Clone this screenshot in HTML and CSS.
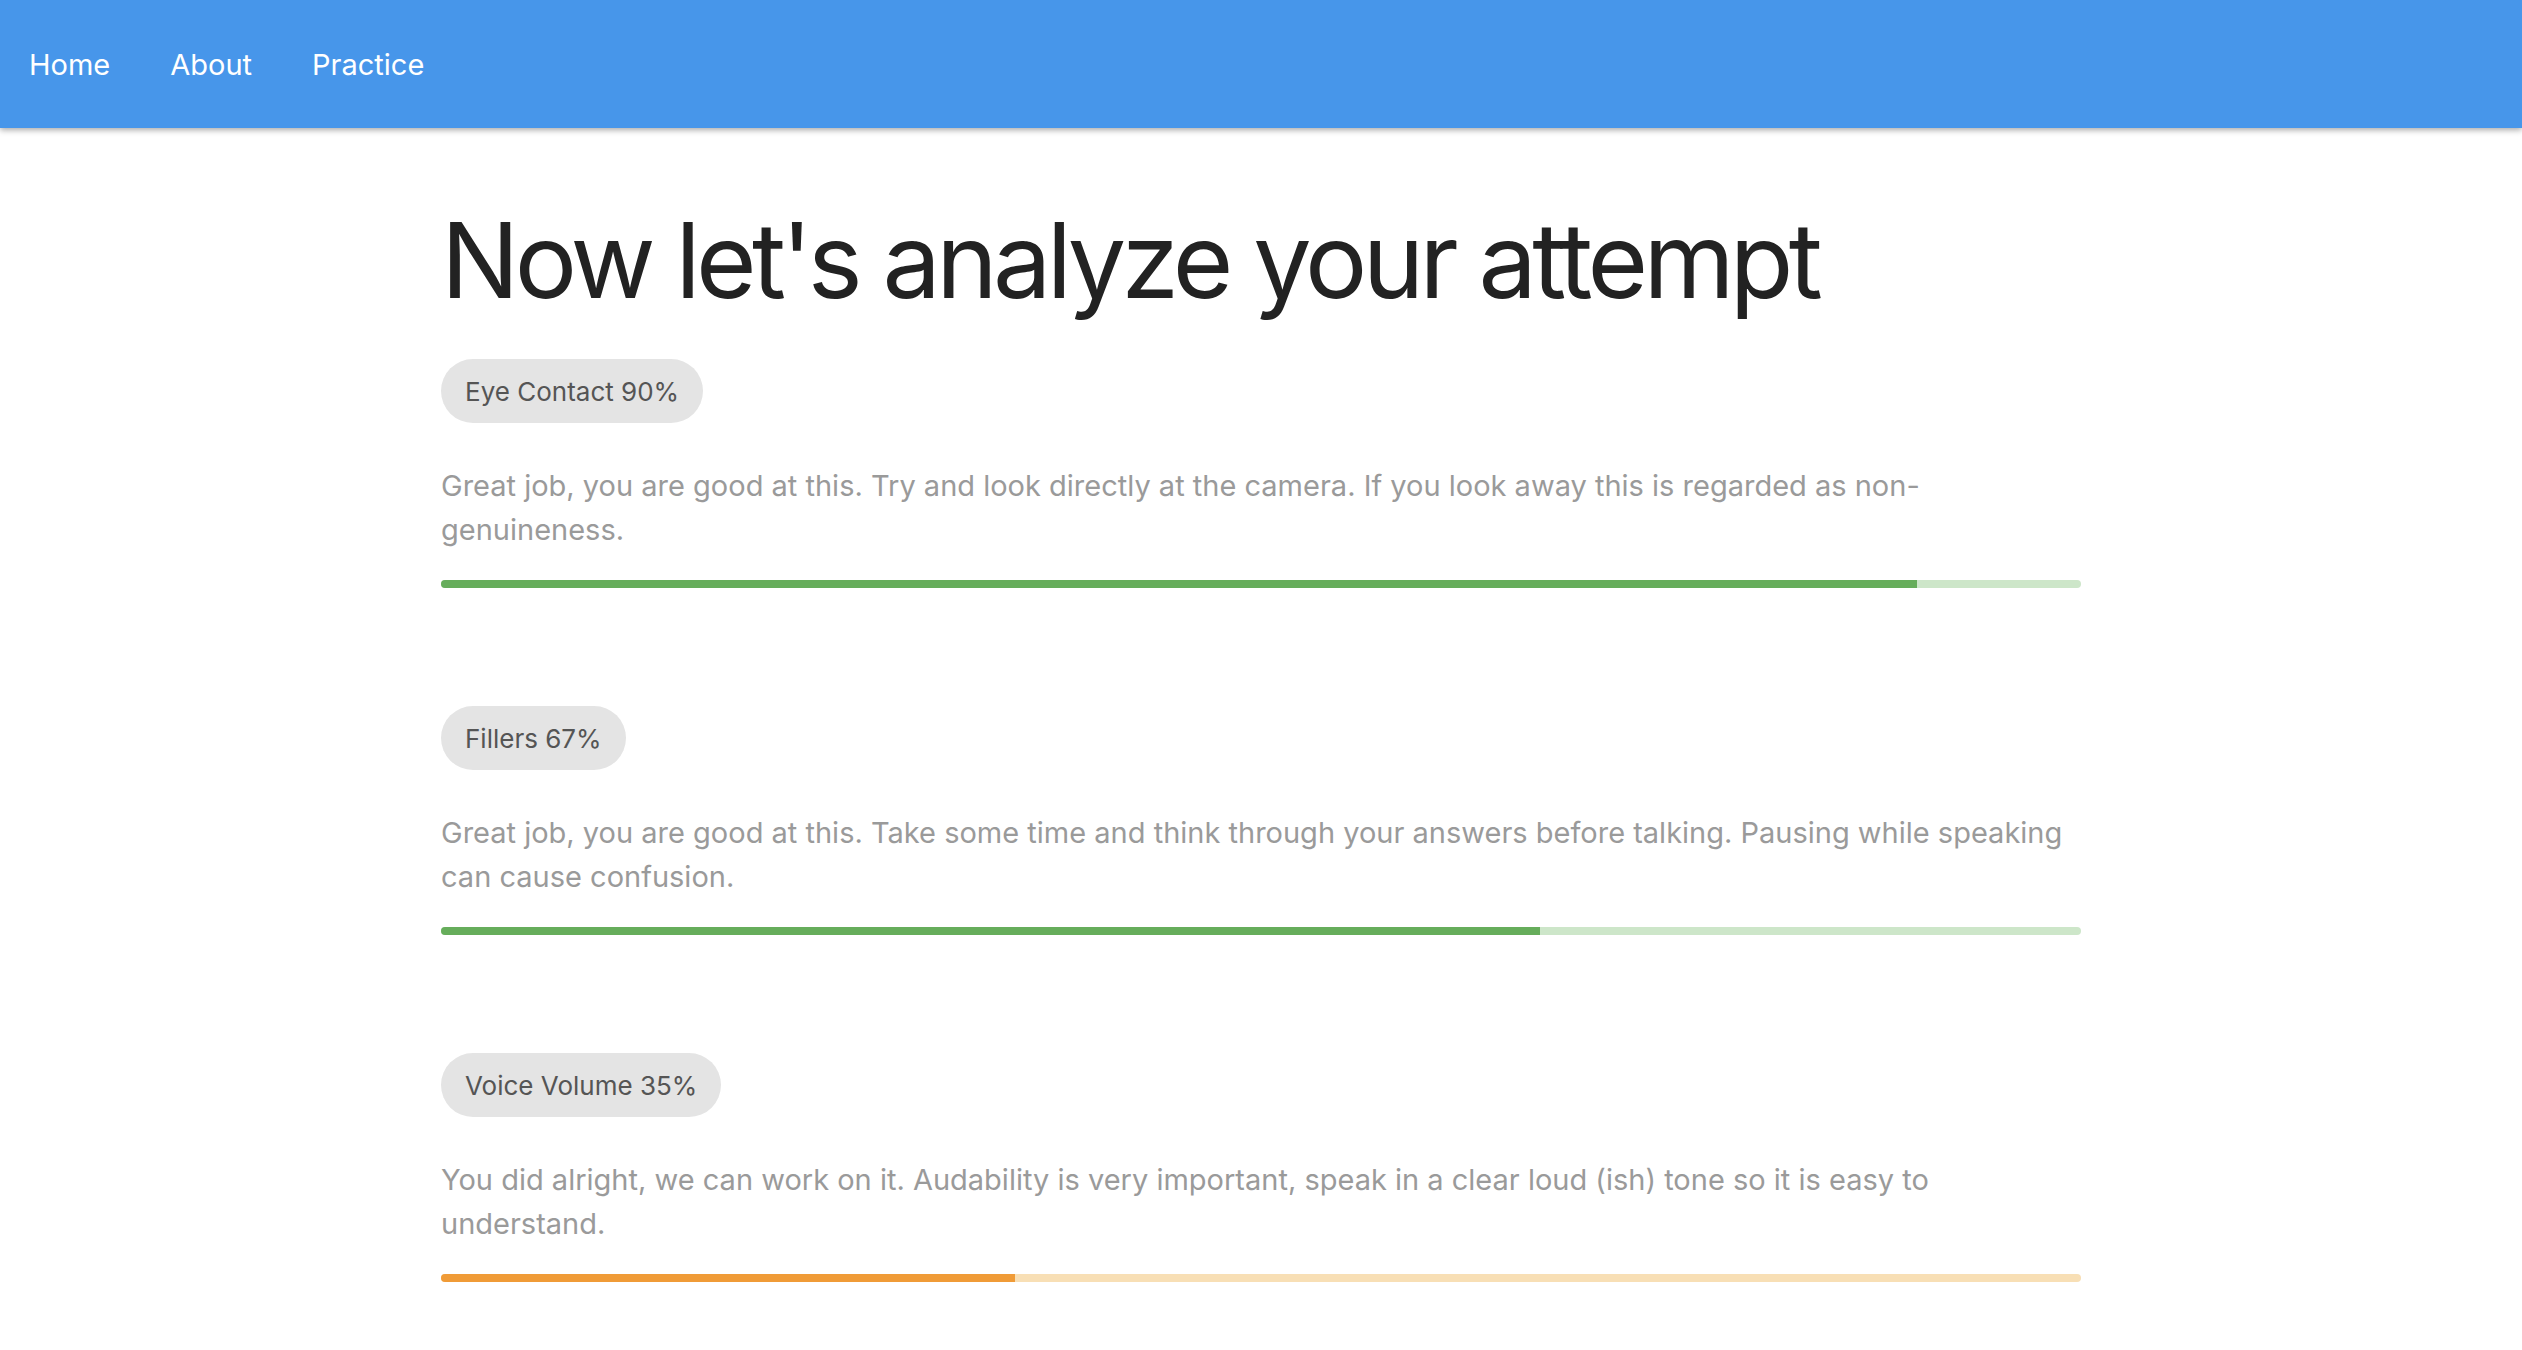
FILE: index.html
```html
<!DOCTYPE html>
<html lang="en">
<head>
<meta charset="utf-8">
<title>Analysis</title>
<link rel="stylesheet" href="styles.css">
</head>
<body>
<header class="navbar">
  <nav class="nav">
    <a class="nav-link" href="#">Home</a>
    <a class="nav-link" href="#">About</a>
    <a class="nav-link" href="#">Practice</a>
  </nav>
</header>
<main class="container">
  <h1 class="title">Now let's analyze your attempt</h1>

  <section class="metric">
    <span class="chip">Eye Contact 90%</span>
    <p class="desc">Great job, you are good at this. Try and look directly at the camera. If you look away this is regarded as non-genuineness.</p>
    <div class="bar bar-green"><div class="bar-fill" style="width:90%"></div></div>
  </section>

  <section class="metric">
    <span class="chip">Fillers 67%</span>
    <p class="desc">Great job, you are good at this. Take some time and think through your answers before talking. Pausing while speaking can cause confusion.</p>
    <div class="bar bar-green"><div class="bar-fill" style="width:67%"></div></div>
  </section>

  <section class="metric">
    <span class="chip">Voice Volume 35%</span>
    <p class="desc">You did alright, we can work on it. Audability is very important, speak in a clear loud (ish) tone so it is easy to understand.</p>
    <div class="bar bar-orange"><div class="bar-fill" style="width:35%"></div></div>
  </section>
</main>
</body>
</html>
```

FILE: styles.css
```css
* { box-sizing: border-box; }

body {
  margin: 0;
  font-family: Inter, "Noto Sans", "Liberation Sans", sans-serif;
  background: #ffffff;
}

.navbar {
  height: 128px;
  background: #4796ea;
  box-shadow: 0 2px 6px rgba(0, 0, 0, 0.35);
  display: flex;
  align-items: center;
  padding-left: 29px;
}

.nav {
  display: flex;
  gap: 60px;
}

.nav-link {
  color: #ffffff;
  font-size: 29px;
  text-decoration: none;
}

.container {
  width: 1640px;
  margin: 0 auto;
  padding-bottom: 60px;
}

.title {
  font-size: 104px;
  font-weight: 400;
  line-height: 127px;
  margin: 69px 0 35px;
  color: #222222;
  letter-spacing: -0.045em;
}

.metric {
  display: flex;
  flex-direction: column;
  align-items: flex-start;
}

.metric + .metric {
  margin-top: 118px;
}

.chip {
  height: 64px;
  padding: 0 24px;
  border-radius: 32px;
  background: #e4e4e4;
  color: #555555;
  font-size: 26px;
  display: flex;
  align-items: center;
}

.desc {
  margin: 41px 0 0;
  font-size: 29px;
  line-height: 44px;
  color: #9a9a9a;
}

.bar {
  margin-top: 28px;
  width: 100%;
  height: 8px;
  border-radius: 4px;
  overflow: hidden;
}

.bar-fill {
  height: 100%;
}

.bar-green { background: #cde6c9; }
.bar-green .bar-fill { background: #66ad5b; }

.bar-orange { background: #f8dfb5; }
.bar-orange .bar-fill { background: #f09b37; }
```
